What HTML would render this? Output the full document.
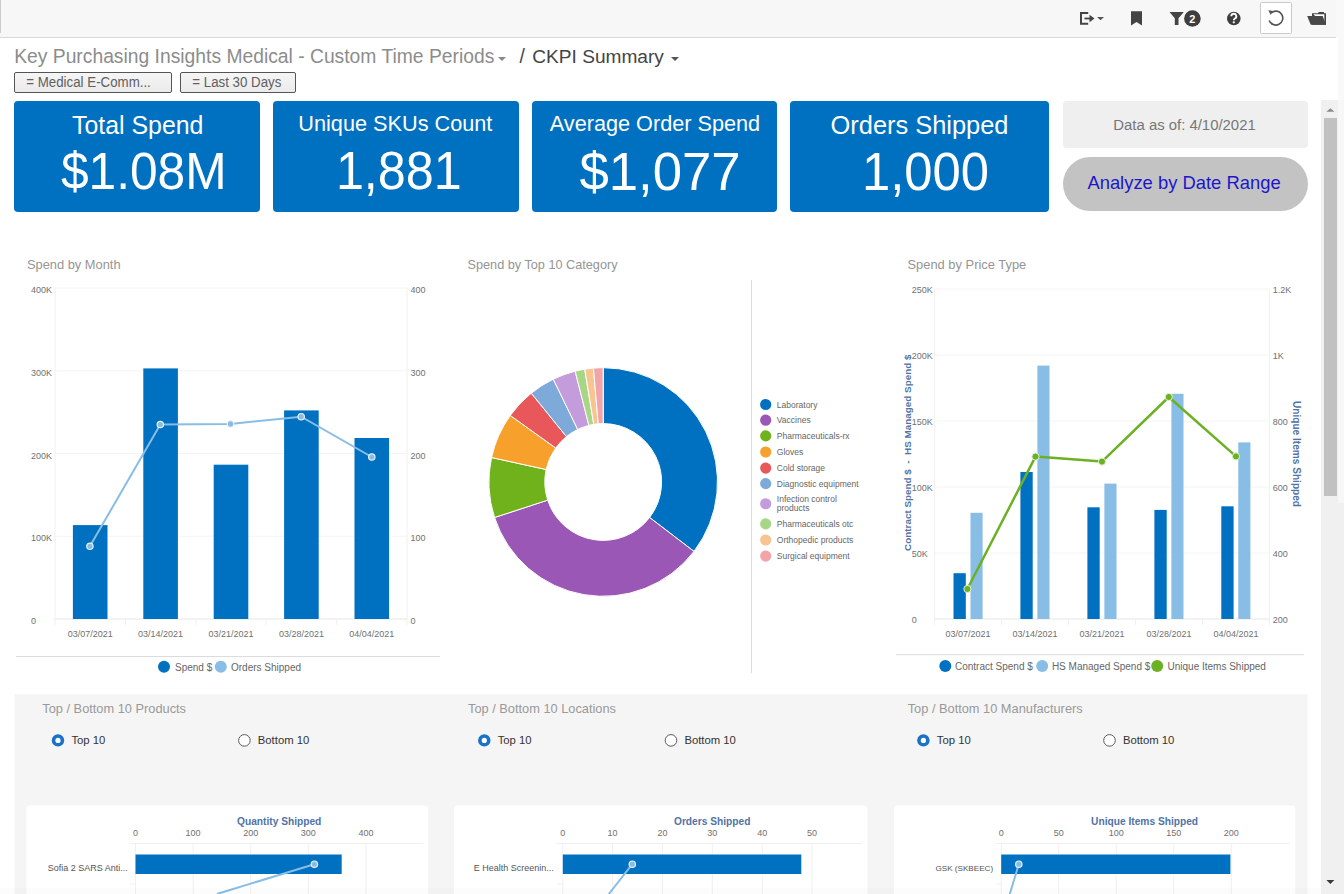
<!DOCTYPE html>
<html><head><meta charset="utf-8">
<style>
html,body{margin:0;padding:0;width:1344px;height:894px;overflow:hidden;background:#fff;font-family:"Liberation Sans",sans-serif;}
.a{position:absolute;}
#topbar{left:0;top:0;width:1336px;height:37px;background:#f7f7f7;border-bottom:1px solid #d9d9d9;}
.hdr{font-size:19.3px;line-height:19px;color:#8c8c8c;white-space:nowrap;top:47px;}
.caret{width:0;height:0;border-left:4px solid transparent;border-right:4px solid transparent;border-top:4px solid #888;top:57px;}
.fbtn{height:19px;border:1px solid #555;border-radius:2px;background:linear-gradient(#f5f5f5,#ebebeb);color:#555;font-size:13px;line-height:19px;white-space:nowrap;top:72px;}
.kpi{background:#0070c0;border-radius:4px;color:#fff;text-align:center;top:101px;height:111px;}
.ft{font-size:13.3px;line-height:1;color:#5f5f5f;white-space:nowrap;transform-origin:0 0;transform:scaleY(1.12);top:74.6px;}
.kt{color:#fff;line-height:1;white-space:nowrap;transform-origin:0 0;}
.kpi .t{position:absolute;left:0;right:0;font-size:22px;line-height:22px;top:12px;white-space:nowrap;}
.kpi .v{position:absolute;left:0;right:0;font-size:50px;line-height:50px;top:46px;white-space:nowrap;transform:scaleY(1.07);}
#scroll{left:1321px;top:100px;width:23px;height:794px;background:#f0f0f0;}
</style></head>
<body>
<div class="a" style="left:0;top:0;width:1344px;height:100px;background:#f9f9f9"></div><div class="a" style="left:0;top:38px;width:1338px;height:62px;background:#fff"></div><div id="topbar" class="a"></div>
<div class="a" style="left:0;top:0;width:1px;height:33px;background:#ccc"></div>
<div class="a hdr" style="left:14.2px">Key Purchasing Insights Medical - Custom Time Periods</div>
<div class="a caret" style="left:498px"></div>
<div class="a hdr" style="left:519.5px;color:#444">/</div><div class="a hdr" style="left:532.3px;color:#444;font-size:19.1px">CKPI Summary</div>
<div class="a caret" style="left:671px;border-top-color:#555"></div>
<div class="a fbtn" style="left:14px;width:156px;"></div><div class="a ft" style="left:26.3px">= Medical E-Comm...</div>
<div class="a fbtn" style="left:180px;width:114px;"></div><div class="a ft" style="left:192.3px">= Last 30 Days</div>

<div class="a kpi" style="left:14px;width:246px;"></div>
<div class="a kpi" style="left:273px;width:246px;"></div>
<div class="a kpi" style="left:532px;width:245px;"></div>
<div class="a kpi" style="left:790px;width:259px;"></div>
<div class="a kt" style="left:72px;top:112.4px;font-size:24.9px;transform:scaleY(1.05)">Total Spend</div>
<div class="a kt" style="left:298.3px;top:112.1px;font-size:21.7px;transform:scaleY(1.04)">Unique SKUs Count</div>
<div class="a kt" style="left:549.8px;top:112.6px;font-size:21.66px;transform:scaleY(1.02)">Average Order Spend</div>
<div class="a kt" style="left:830.6px;top:112.7px;font-size:25.4px;">Orders Shipped</div>
<div class="a kt" style="left:60.9px;top:146.2px;font-size:49.7px;transform:scaleY(1.044)">$1.08M</div>
<div class="a kt" style="left:335.9px;top:144.3px;font-size:50.3px;transform:scaleY(1.078)">1,881</div>
<div class="a kt" style="left:579.5px;top:144.8px;font-size:52.7px;transform:scaleY(1.013)">$1,077</div>
<div class="a kt" style="left:861.9px;top:146.3px;font-size:50.8px;transform:scaleY(1.04)">1,000</div>
<div class="a" style="left:1063px;top:101px;width:245px;height:47px;background:#efefef;border-radius:4px;"></div>
<div class="a" style="left:1062px;top:118px;width:245px;text-align:center;font-size:14.9px;line-height:15px;color:#777;white-space:nowrap">Data as of: 4/10/2021</div>
<div class="a" style="left:1063px;top:157px;width:245px;height:54px;background:#c3c3c3;border-radius:27px;"></div>
<div class="a" style="left:1061.5px;top:173.6px;width:245px;text-align:center;font-size:18.4px;line-height:18px;color:#1b17c9;white-space:nowrap">Analyze by Date Range</div>

<svg class="a" style="left:0;top:0" width="1344" height="40">
 <g fill="#444" stroke="none">
  <!-- export -->
  <path d="M1080 12 h8.2 v2 h-6.2 v8.7 h6.2 v2 h-8.2 z"/>
  <rect x="1084.5" y="17.6" width="6" height="1.8"/>
  <path d="M1089.5 14.8 l5 3.7 l-5 3.7 z"/>
  <path d="M1097 17 h7 l-3.5 3.2 z" fill="#555"/>
  <!-- bookmark -->
  <path d="M1131 11.3 h11 v14.2 l-5.5 -3.6 l-5.5 3.6 z"/>
  <!-- funnel -->
  <path d="M1169.5 12 h14.3 l-5.3 6.2 v6.8 h-3.7 v-6.8 z"/>
  <circle cx="1192.4" cy="18.5" r="8.3" fill="#3e3e3e"/>
  <!-- help -->
  <circle cx="1233.8" cy="18.5" r="6.8" fill="#3e3e3e"/>
 </g>
 <text x="1192.4" y="22.6" font-family="Liberation Sans" font-weight="bold" font-size="11" fill="#fff" text-anchor="middle">2</text>
 <path d="M1231.3 16.3 a2.5 2.5 0 1 1 3.6 2.2 q-1.1 0.6 -1.1 1.7" fill="none" stroke="#fff" stroke-width="1.9"/>
 <circle cx="1233.8" cy="22.3" r="1.1" fill="#fff"/>
 <!-- refresh button -->
 <rect x="1260.5" y="2.5" width="31" height="31" fill="#fff" stroke="#c9c9c9" rx="1"/>
 <path d="M1271.2 12.8 A7 7 0 1 1 1269.2 20.5" fill="none" stroke="#555" stroke-width="1.6"/>
 <path d="M1268.3 10.2 l4.6 0.8 l-2.2 4 z" fill="#555"/>
 <!-- folder -->
 <path d="M1312 24.8 V13.2 h6 l0.8 -1.2 h4.8 l0.6 1.2 h1.8 V24.8 z" fill="#444"/>
 <path d="M1313.2 14.3 h11.2 v9.5 z" fill="#fff"/>
 <path d="M1307.2 15.9 h15.5 l3.3 8.9 h-15.3 z" fill="#484848"/>
</svg>


<svg class="a" style="left:0;top:0" width="1344" height="894" font-family="Liberation Sans">
<g id="c1">
<text x="27" y="268.5" font-size="12.85" fill="#959595">Spend by Month</text>
<line x1="55" y1="288.0" x2="407" y2="288.0" stroke="#f4f4f4" stroke-width="1"/>
<line x1="55" y1="370.8" x2="407" y2="370.8" stroke="#f4f4f4" stroke-width="1"/>
<line x1="55" y1="453.5" x2="407" y2="453.5" stroke="#f4f4f4" stroke-width="1"/>
<line x1="55" y1="536.2" x2="407" y2="536.2" stroke="#f4f4f4" stroke-width="1"/>
<line x1="55" y1="619.0" x2="407" y2="619.0" stroke="#f4f4f4" stroke-width="1"/>
<line x1="55" y1="288" x2="55" y2="625" stroke="#f0f0f0"/>
<line x1="407" y1="288" x2="407" y2="625" stroke="#f0f0f0"/>
<line x1="55" y1="619" x2="407" y2="619" stroke="#ececec"/>
<line x1="125.4" y1="619" x2="125.4" y2="625" stroke="#f0f0f0"/>
<line x1="195.8" y1="619" x2="195.8" y2="625" stroke="#f0f0f0"/>
<line x1="266.2" y1="619" x2="266.2" y2="625" stroke="#f0f0f0"/>
<line x1="336.6" y1="619" x2="336.6" y2="625" stroke="#f0f0f0"/>
<text x="31" y="293.0" font-size="9" fill="#707070">400K</text>
<text x="410.4" y="293.0" font-size="9" fill="#707070">400</text>
<text x="31" y="375.8" font-size="9" fill="#707070">300K</text>
<text x="410.4" y="375.8" font-size="9" fill="#707070">300</text>
<text x="31" y="458.5" font-size="9" fill="#707070">200K</text>
<text x="410.4" y="458.5" font-size="9" fill="#707070">200</text>
<text x="31" y="541.2" font-size="9" fill="#707070">100K</text>
<text x="410.4" y="541.2" font-size="9" fill="#707070">100</text>
<text x="31" y="624.0" font-size="9" fill="#707070">0</text>
<text x="410.4" y="624.0" font-size="9" fill="#707070">0</text>
<rect x="72.9" y="525.1" width="34.6" height="93.9" fill="#0070c0"/>
<text x="90.2" y="636.8" font-size="9" fill="#707070" text-anchor="middle">03/07/2021</text>
<rect x="143.3" y="368.4" width="34.6" height="250.6" fill="#0070c0"/>
<text x="160.6" y="636.8" font-size="9" fill="#707070" text-anchor="middle">03/14/2021</text>
<rect x="213.7" y="464.7" width="34.6" height="154.3" fill="#0070c0"/>
<text x="231.0" y="636.8" font-size="9" fill="#707070" text-anchor="middle">03/21/2021</text>
<rect x="284.1" y="410.4" width="34.6" height="208.6" fill="#0070c0"/>
<text x="301.4" y="636.8" font-size="9" fill="#707070" text-anchor="middle">03/28/2021</text>
<rect x="354.5" y="438" width="34.6" height="181.0" fill="#0070c0"/>
<text x="371.8" y="636.8" font-size="9" fill="#707070" text-anchor="middle">04/04/2021</text>
<polyline points="89.9,546.3 160.3,424.5 230.5,423.9 301.2,416.7 371.8,457" fill="none" stroke="#88bde6" stroke-width="2"/>
<circle cx="89.9" cy="546.3" r="3.2" fill="#8cbbe0" stroke="#e2f2fc" stroke-width="1.2"/>
<circle cx="160.3" cy="424.5" r="3.2" fill="#8cbbe0" stroke="#e2f2fc" stroke-width="1.2"/>
<circle cx="230.5" cy="423.9" r="3.2" fill="#8cbbe0" stroke="#e2f2fc" stroke-width="1.2"/>
<circle cx="301.2" cy="416.7" r="3.2" fill="#8cbbe0" stroke="#e2f2fc" stroke-width="1.2"/>
<circle cx="371.8" cy="457" r="3.2" fill="#8cbbe0" stroke="#e2f2fc" stroke-width="1.2"/>
<line x1="16" y1="656.5" x2="440" y2="656.5" stroke="#dcdcdc"/>
<circle cx="164" cy="666.7" r="6" fill="#0070c0"/>
<text x="175" y="670.8" font-size="10" fill="#666">Spend $</text>
<circle cx="220.8" cy="666.7" r="6" fill="#88bde6"/>
<text x="231" y="670.8" font-size="10" fill="#666">Orders Shipped</text>
</g>
<g id="c2">
<text x="467.5" y="268.5" font-size="12.7" fill="#959595">Spend by Top 10 Category</text>
<path d="M603.20 367.70 A114.3 114.3 0 0 1 694.00 551.42 L649.59 517.47 A58.4 58.4 0 0 0 603.20 423.60 Z" fill="#0070c0" stroke="#fff" stroke-width="1" stroke-linejoin="round"/>
<path d="M694.00 551.42 A114.3 114.3 0 0 1 494.56 517.51 L547.69 500.14 A58.4 58.4 0 0 0 649.59 517.47 Z" fill="#9b57b5" stroke="#fff" stroke-width="1" stroke-linejoin="round"/>
<path d="M494.56 517.51 A114.3 114.3 0 0 1 491.54 457.55 L546.15 469.51 A58.4 58.4 0 0 0 547.69 500.14 Z" fill="#70b21c" stroke="#fff" stroke-width="1" stroke-linejoin="round"/>
<path d="M491.54 457.55 A114.3 114.3 0 0 1 510.26 415.46 L555.71 448.00 A58.4 58.4 0 0 0 546.15 469.51 Z" fill="#f7a12c" stroke="#fff" stroke-width="1" stroke-linejoin="round"/>
<path d="M510.26 415.46 A114.3 114.3 0 0 1 531.27 393.17 L566.45 436.61 A58.4 58.4 0 0 0 555.71 448.00 Z" fill="#e8585b" stroke="#fff" stroke-width="1" stroke-linejoin="round"/>
<path d="M531.27 393.17 A114.3 114.3 0 0 1 553.27 379.18 L577.69 429.47 A58.4 58.4 0 0 0 566.45 436.61 Z" fill="#7eaad9" stroke="#fff" stroke-width="1" stroke-linejoin="round"/>
<path d="M553.27 379.18 A114.3 114.3 0 0 1 575.16 371.19 L588.87 425.38 A58.4 58.4 0 0 0 577.69 429.47 Z" fill="#c49cdc" stroke="#fff" stroke-width="1" stroke-linejoin="round"/>
<path d="M575.16 371.19 A114.3 114.3 0 0 1 584.73 369.20 L593.76 424.37 A58.4 58.4 0 0 0 588.87 425.38 Z" fill="#a8d687" stroke="#fff" stroke-width="1" stroke-linejoin="round"/>
<path d="M584.73 369.20 A114.3 114.3 0 0 1 593.44 368.12 L598.21 423.81 A58.4 58.4 0 0 0 593.76 424.37 Z" fill="#f8c590" stroke="#fff" stroke-width="1" stroke-linejoin="round"/>
<path d="M593.44 368.12 A114.3 114.3 0 0 1 603.20 367.70 L603.20 423.60 A58.4 58.4 0 0 0 598.21 423.81 Z" fill="#f2a5a8" stroke="#fff" stroke-width="1" stroke-linejoin="round"/>
<line x1="751.5" y1="280" x2="751.5" y2="673" stroke="#dedede"/>
<circle cx="765.7" cy="404.5" r="5.6" fill="#0070c0"/>
<text x="776.8" y="407.7" font-size="8.5" fill="#666">Laboratory</text>
<circle cx="765.7" cy="420.2" r="5.6" fill="#9b57b5"/>
<text x="776.8" y="423.4" font-size="8.5" fill="#666">Vaccines</text>
<circle cx="765.7" cy="435.9" r="5.6" fill="#70b21c"/>
<text x="776.8" y="439.1" font-size="8.5" fill="#666">Pharmaceuticals-rx</text>
<circle cx="765.7" cy="452" r="5.6" fill="#f7a12c"/>
<text x="776.8" y="455.2" font-size="8.5" fill="#666">Gloves</text>
<circle cx="765.7" cy="468.1" r="5.6" fill="#e8585b"/>
<text x="776.8" y="471.3" font-size="8.5" fill="#666">Cold storage</text>
<circle cx="765.7" cy="483.6" r="5.6" fill="#7eaad9"/>
<text x="776.8" y="486.8" font-size="8.5" fill="#666">Diagnostic equipment</text>
<circle cx="765.7" cy="503.75" r="5.6" fill="#c49cdc"/>
<circle cx="765.7" cy="523.9" r="5.6" fill="#a8d687"/>
<text x="776.8" y="527.1" font-size="8.5" fill="#666">Pharmaceuticals otc</text>
<circle cx="765.7" cy="540" r="5.6" fill="#f8c590"/>
<text x="776.8" y="543.2" font-size="8.5" fill="#666">Orthopedic products</text>
<circle cx="765.7" cy="556.1" r="5.6" fill="#f2a5a8"/>
<text x="776.8" y="559.3" font-size="8.5" fill="#666">Surgical equipment</text>
<text x="776.8" y="501.7" font-size="8.5" fill="#666">Infection control</text>
<text x="776.8" y="510.8" font-size="8.5" fill="#666">products</text>
</g>
<g id="c3">
<text x="907.5" y="268.5" font-size="12.9" fill="#959595">Spend by Price Type</text>
<line x1="934.6" y1="289.0" x2="1269.4" y2="289.0" stroke="#f4f4f4"/>
<line x1="934.6" y1="355.0" x2="1269.4" y2="355.0" stroke="#f4f4f4"/>
<line x1="934.6" y1="421.0" x2="1269.4" y2="421.0" stroke="#f4f4f4"/>
<line x1="934.6" y1="487.0" x2="1269.4" y2="487.0" stroke="#f4f4f4"/>
<line x1="934.6" y1="553.0" x2="1269.4" y2="553.0" stroke="#f4f4f4"/>
<line x1="934.6" y1="619.0" x2="1269.4" y2="619.0" stroke="#f4f4f4"/>
<line x1="934.6" y1="289" x2="934.6" y2="625" stroke="#f0f0f0"/>
<line x1="1269.4" y1="289" x2="1269.4" y2="625" stroke="#f0f0f0"/>
<line x1="934.6" y1="619" x2="1269.4" y2="619" stroke="#ececec"/>
<line x1="1001.6" y1="619" x2="1001.6" y2="625" stroke="#f0f0f0"/>
<line x1="1068.5" y1="619" x2="1068.5" y2="625" stroke="#f0f0f0"/>
<line x1="1135.5" y1="619" x2="1135.5" y2="625" stroke="#f0f0f0"/>
<line x1="1202.4" y1="619" x2="1202.4" y2="625" stroke="#f0f0f0"/>
<text x="911.8" y="293.4" font-size="9" fill="#707070">250K</text>
<text x="1272.8" y="293.4" font-size="9" fill="#707070">1.2K</text>
<text x="911.8" y="359.4" font-size="9" fill="#707070">200K</text>
<text x="1272.8" y="359.4" font-size="9" fill="#707070">1K</text>
<text x="911.8" y="425.4" font-size="9" fill="#707070">150K</text>
<text x="1272.8" y="425.4" font-size="9" fill="#707070">800</text>
<text x="911.8" y="491.4" font-size="9" fill="#707070">100K</text>
<text x="1272.8" y="491.4" font-size="9" fill="#707070">600</text>
<text x="911.8" y="557.4" font-size="9" fill="#707070">50K</text>
<text x="1272.8" y="557.4" font-size="9" fill="#707070">400</text>
<text x="911.8" y="623.4" font-size="9" fill="#707070">0</text>
<text x="1272.8" y="623.4" font-size="9" fill="#707070">200</text>
<rect x="953.5" y="573.2" width="12.3" height="45.8" fill="#0070c0"/>
<rect x="970.5" y="512.8" width="12.1" height="106.2" fill="#88bde6"/>
<text x="968.1" y="636.8" font-size="9" fill="#707070" text-anchor="middle">03/07/2021</text>
<rect x="1020.4" y="472" width="12.3" height="147.0" fill="#0070c0"/>
<rect x="1037.4" y="365.6" width="12.1" height="253.4" fill="#88bde6"/>
<text x="1035.0" y="636.8" font-size="9" fill="#707070" text-anchor="middle">03/14/2021</text>
<rect x="1087.4" y="507.3" width="12.3" height="111.7" fill="#0070c0"/>
<rect x="1104.4" y="483.6" width="12.1" height="135.4" fill="#88bde6"/>
<text x="1102.0" y="636.8" font-size="9" fill="#707070" text-anchor="middle">03/21/2021</text>
<rect x="1154.4" y="509.9" width="12.3" height="109.1" fill="#0070c0"/>
<rect x="1171.4" y="393.8" width="12.1" height="225.2" fill="#88bde6"/>
<text x="1169.0" y="636.8" font-size="9" fill="#707070" text-anchor="middle">03/28/2021</text>
<rect x="1221.3" y="506.3" width="12.3" height="112.7" fill="#0070c0"/>
<rect x="1238.3" y="442.4" width="12.1" height="176.6" fill="#88bde6"/>
<text x="1235.9" y="636.8" font-size="9" fill="#707070" text-anchor="middle">04/04/2021</text>
<polyline points="967.4,589 1035.5,456.6 1102,461.6 1168.8,397 1236,456.4" fill="none" stroke="#6cb023" stroke-width="2.5" stroke-linejoin="round"/>
<circle cx="967.4" cy="589" r="3.6" fill="#6cb023" stroke="#e4f3d6" stroke-width="1"/>
<circle cx="1035.5" cy="456.6" r="3.6" fill="#6cb023" stroke="#e4f3d6" stroke-width="1"/>
<circle cx="1102" cy="461.6" r="3.6" fill="#6cb023" stroke="#e4f3d6" stroke-width="1"/>
<circle cx="1168.8" cy="397" r="3.6" fill="#6cb023" stroke="#e4f3d6" stroke-width="1"/>
<circle cx="1236" cy="456.4" r="3.6" fill="#6cb023" stroke="#e4f3d6" stroke-width="1"/>
<text style="white-space:pre" transform="translate(910.6 452.7) rotate(-90)" font-size="9.9" font-weight="bold" fill="#5273a6" text-anchor="middle">Contract Spend $  -  HS Managed Spend $</text>
<text transform="translate(1292.6 454) rotate(90)" font-size="10.1" font-weight="bold" fill="#5273a6" text-anchor="middle">Unique Items Shipped</text>
<line x1="896" y1="654.7" x2="1304" y2="654.7" stroke="#dcdcdc"/>
<circle cx="945.3" cy="666" r="6" fill="#0070c0"/>
<text x="955" y="670.1" font-size="10" fill="#666">Contract Spend $</text>
<circle cx="1042.2" cy="666" r="6" fill="#88bde6"/>
<text x="1051.9" y="670.1" font-size="10" fill="#666">HS Managed Spend $</text>
<circle cx="1157.2" cy="666" r="6" fill="#6cb023"/>
<text x="1167.5" y="670.1" font-size="10" fill="#666">Unique Items Shipped</text>
</g>
<g id="c4">
<rect x="14.3" y="694.2" width="1293.3" height="200" fill="#f5f5f5"/>
<rect x="26.5" y="805.5" width="401.3" height="120" rx="3" fill="#fff"/>
<rect x="454" y="805.5" width="413.3" height="120" rx="3" fill="#fff"/>
<rect x="894" y="805.5" width="401.2" height="120" rx="3" fill="#fff"/>
<text x="42.3" y="712.9" font-size="12.8" fill="#999">Top / Bottom 10 Products</text>
<circle cx="58" cy="740.4" r="6.2" fill="#1a71c8"/><circle cx="58" cy="740.4" r="2.6" fill="#fff"/>
<text x="71.4" y="744.2" font-size="11.3" fill="#333">Top 10</text>
<circle cx="244.4" cy="740.4" r="5.8" fill="#fff" stroke="#5a5a5a" stroke-width="1"/>
<text x="257.8" y="744.2" font-size="11.3" fill="#333">Bottom 10</text>
<text x="468" y="712.9" font-size="12.8" fill="#999">Top / Bottom 10 Locations</text>
<circle cx="484.3" cy="740.4" r="6.2" fill="#1a71c8"/><circle cx="484.3" cy="740.4" r="2.6" fill="#fff"/>
<text x="497.7" y="744.2" font-size="11.3" fill="#333">Top 10</text>
<circle cx="671" cy="740.4" r="5.8" fill="#fff" stroke="#5a5a5a" stroke-width="1"/>
<text x="684.4" y="744.2" font-size="11.3" fill="#333">Bottom 10</text>
<text x="907.7" y="712.9" font-size="12.8" fill="#999">Top / Bottom 10 Manufacturers</text>
<circle cx="923.4" cy="740.4" r="6.2" fill="#1a71c8"/><circle cx="923.4" cy="740.4" r="2.6" fill="#fff"/>
<text x="936.8" y="744.2" font-size="11.3" fill="#333">Top 10</text>
<circle cx="1109.5" cy="740.4" r="5.8" fill="#fff" stroke="#5a5a5a" stroke-width="1"/>
<text x="1122.9" y="744.2" font-size="11.3" fill="#333">Bottom 10</text>
<text x="279.2" y="824.7" font-size="10.2" font-weight="bold" fill="#5273a6" text-anchor="middle">Quantity Shipped</text>
<line x1="129.5" y1="843.5" x2="423" y2="843.5" stroke="#f0f0f0"/>
<line x1="135.5" y1="843.5" x2="135.5" y2="894" stroke="#f0f0f0"/>
<text x="135.5" y="835.6" font-size="9" fill="#707070" text-anchor="middle">0</text>
<line x1="193.1" y1="843.5" x2="193.1" y2="894" stroke="#f0f0f0"/>
<text x="193.1" y="835.6" font-size="9" fill="#707070" text-anchor="middle">100</text>
<line x1="250.7" y1="843.5" x2="250.7" y2="894" stroke="#f0f0f0"/>
<text x="250.7" y="835.6" font-size="9" fill="#707070" text-anchor="middle">200</text>
<line x1="308.3" y1="843.5" x2="308.3" y2="894" stroke="#f0f0f0"/>
<text x="308.3" y="835.6" font-size="9" fill="#707070" text-anchor="middle">300</text>
<line x1="365.9" y1="843.5" x2="365.9" y2="894" stroke="#f0f0f0"/>
<text x="365.9" y="835.6" font-size="9" fill="#707070" text-anchor="middle">400</text>
<line x1="129.5" y1="884" x2="135.5" y2="884" stroke="#f0f0f0"/>
<rect x="135.5" y="854.5" width="206.2" height="19.5" fill="#0070c0"/>
<line x1="314.4" y1="864.2" x2="216.9" y2="894" stroke="#88bde6" stroke-width="2"/>
<circle cx="314.4" cy="864.2" r="3.2" fill="#8cbbe0" stroke="#e2f2fc" stroke-width="1.2"/>
<text x="127.8" y="871" font-size="9" fill="#555" text-anchor="end">Sofia 2 SARS Anti...</text>
<text x="712.2" y="824.7" font-size="10.2" font-weight="bold" fill="#5273a6" text-anchor="middle">Orders Shipped</text>
<line x1="556.8" y1="843.5" x2="862" y2="843.5" stroke="#f0f0f0"/>
<line x1="562.8" y1="843.5" x2="562.8" y2="894" stroke="#f0f0f0"/>
<text x="562.8" y="835.6" font-size="9" fill="#707070" text-anchor="middle">0</text>
<line x1="612.6" y1="843.5" x2="612.6" y2="894" stroke="#f0f0f0"/>
<text x="612.6" y="835.6" font-size="9" fill="#707070" text-anchor="middle">10</text>
<line x1="662.5" y1="843.5" x2="662.5" y2="894" stroke="#f0f0f0"/>
<text x="662.5" y="835.6" font-size="9" fill="#707070" text-anchor="middle">20</text>
<line x1="712.3" y1="843.5" x2="712.3" y2="894" stroke="#f0f0f0"/>
<text x="712.3" y="835.6" font-size="9" fill="#707070" text-anchor="middle">30</text>
<line x1="762.2" y1="843.5" x2="762.2" y2="894" stroke="#f0f0f0"/>
<text x="762.2" y="835.6" font-size="9" fill="#707070" text-anchor="middle">40</text>
<line x1="812.0" y1="843.5" x2="812.0" y2="894" stroke="#f0f0f0"/>
<text x="812.0" y="835.6" font-size="9" fill="#707070" text-anchor="middle">50</text>
<line x1="556.8" y1="884" x2="562.8" y2="884" stroke="#f0f0f0"/>
<rect x="562.8" y="854.5" width="238.5" height="19.5" fill="#0070c0"/>
<line x1="632.3" y1="864.2" x2="608.8" y2="894" stroke="#88bde6" stroke-width="2"/>
<circle cx="632.3" cy="864.2" r="3.2" fill="#8cbbe0" stroke="#e2f2fc" stroke-width="1.2"/>
<text x="553.8" y="871" font-size="9" fill="#555" text-anchor="end">E Health Screenin...</text>
<text x="1144.6" y="824.7" font-size="10.2" font-weight="bold" fill="#5273a6" text-anchor="middle">Unique Items Shipped</text>
<line x1="995.2" y1="843.5" x2="1290" y2="843.5" stroke="#f0f0f0"/>
<line x1="1001.2" y1="843.5" x2="1001.2" y2="894" stroke="#f0f0f0"/>
<text x="1001.2" y="835.6" font-size="9" fill="#707070" text-anchor="middle">0</text>
<line x1="1058.7" y1="843.5" x2="1058.7" y2="894" stroke="#f0f0f0"/>
<text x="1058.7" y="835.6" font-size="9" fill="#707070" text-anchor="middle">50</text>
<line x1="1116.2" y1="843.5" x2="1116.2" y2="894" stroke="#f0f0f0"/>
<text x="1116.2" y="835.6" font-size="9" fill="#707070" text-anchor="middle">100</text>
<line x1="1173.8" y1="843.5" x2="1173.8" y2="894" stroke="#f0f0f0"/>
<text x="1173.8" y="835.6" font-size="9" fill="#707070" text-anchor="middle">150</text>
<line x1="1231.3" y1="843.5" x2="1231.3" y2="894" stroke="#f0f0f0"/>
<text x="1231.3" y="835.6" font-size="9" fill="#707070" text-anchor="middle">200</text>
<line x1="995.2" y1="884" x2="1001.2" y2="884" stroke="#f0f0f0"/>
<rect x="1001.2" y="854.5" width="229.2" height="19.5" fill="#0070c0"/>
<line x1="1018.8" y1="864.2" x2="1009.8" y2="894" stroke="#88bde6" stroke-width="2"/>
<circle cx="1018.8" cy="864.2" r="3.2" fill="#8cbbe0" stroke="#e2f2fc" stroke-width="1.2"/>
<text x="993.1" y="871" font-size="8.1" fill="#555" text-anchor="end">GSK (SKBEEC)</text>
<rect x="0" y="888" width="1321" height="6" fill="#000" fill-opacity="0.012"/>
</g>

</svg>
<div id="scroll" class="a"></div>
<div class="a" style="left:1338px;top:100px;width:6px;height:403px;background:#f7f7f7"></div>
<div class="a" style="left:1324px;top:118px;width:13px;height:378px;background:#c1c1c1"></div>
<svg class="a" style="left:1320px;top:100px" width="24" height="794"><path d="M6.4 11.7 L10.4 8.3 L14.4 11.7 Z" fill="#8a8a8a"/><path d="M6.4 780 L10.4 784 L14.4 780 Z" fill="#3a3a3a"/></svg>
</body></html>
